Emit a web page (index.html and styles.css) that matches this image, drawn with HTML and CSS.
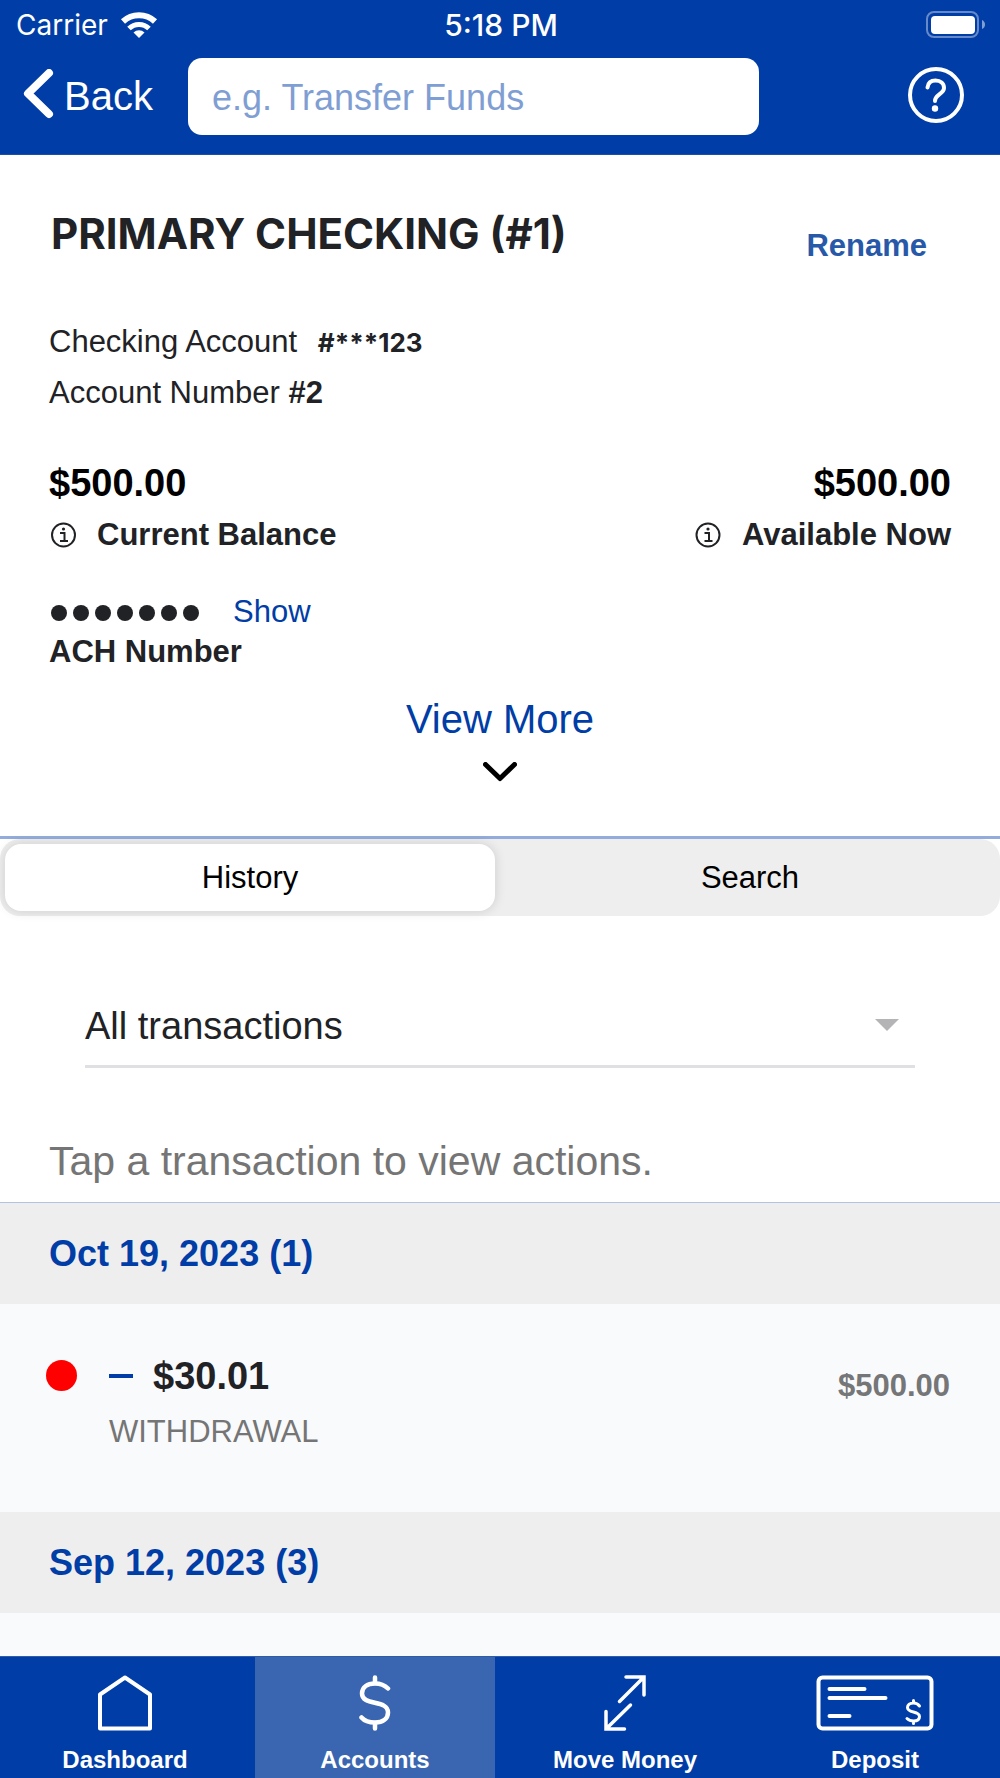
FILE: index.html
```html
<!DOCTYPE html>
<html lang="en">
<head>
    <meta charset="UTF-8">
    <meta name="viewport" content="width=device-width, initial-scale=1.0">
    <title>Primary Checking</title>
    <link rel="stylesheet" href="styles.css">
</head>
<body>
    <header class="header">
        <div class="status-bar">
            <div class="carrier">
                <span>Carrier</span>
                <svg width="38" height="28" viewBox="0 0 38 28" fill="none" stroke="#fff" stroke-width="6">
                    <path d="M3 10.500a23.500 23.500 0 0 1 32 0"/>
                    <path d="M9 17.500a14.200 14.200 0 0 1 20 0" stroke-width="5"/>
                    <path d="M19 27l-5.500-5.500a8 8 0 0 1 11 0z" fill="#fff" stroke="none"/>
                </svg>
            </div>
            <div class="time">5:18 PM</div>
            <div class="battery">
                <svg width="60" height="28" viewBox="0 0 60 28" fill="none">
                    <rect x="1" y="1" width="51" height="25" rx="7" stroke="#fff" stroke-opacity=".4" stroke-width="2"/>
                    <rect x="5" y="5" width="44" height="18" rx="4" fill="#fff"/>
                    <path d="M56 9q3 1.500 3 4.500t-3 4.500z" fill="#fff" fill-opacity=".5"/>
                </svg>
            </div>
        </div>
        <div class="nav">
            <a href="#" class="back">
                <svg width="32" height="50" viewBox="0 0 32 50" fill="none" stroke="#fff" stroke-width="8" stroke-linecap="round" stroke-linejoin="round">
                    <path d="M26 4L5 24.500L26 45"/>
                </svg>
                <span>Back</span>
            </a>
            <input type="text" class="search" placeholder="e.g. Transfer Funds" aria-label="Search">
            <button type="button" class="help" aria-label="Help">
                <svg width="56" height="56" viewBox="0 0 56 56" fill="none" stroke="#fff" stroke-width="4" stroke-linecap="round">
                    <circle cx="28" cy="28" r="26"/>
                    <path d="M19.500 20.500c.5-4.500 3.500-7 8-7c5 0 8.500 3 8.500 7.500c0 6-9 6.500-9 13"/>
                    <circle cx="27" cy="41.500" r="3.200" fill="#fff" stroke="none"/>
                </svg>
            </button>
        </div>
    </header>

    <main class="content">
        <section class="account">
            <div class="title-row">
                <h1>PRIMARY CHECKING (#1)</h1>
                <button type="button" class="rename">Rename</button>
            </div>
            <p class="info-line">Checking Account <span class="masked">#***123</span></p>
            <p class="info-line">Account Number <b>#2</b></p>

            <div class="balances">
                <div class="balance">
                    <div class="amount">$500.00</div>
                    <div class="balance-label">
                        <svg width="28" height="28" viewBox="0 0 28 28" fill="none" stroke="#212226" stroke-width="2">
                            <circle cx="14.500" cy="14" r="11.500"/>
                            <path d="M11 12H15.500v8M11 20h8"/>
                            <circle cx="14.500" cy="8" r="1.600" fill="#212226" stroke="none"/>
                        </svg>
                        <span>Current Balance</span>
                    </div>
                </div>
                <div class="balance right">
                    <div class="amount">$500.00</div>
                    <div class="balance-label">
                        <svg width="28" height="28" viewBox="0 0 28 28" fill="none" stroke="#212226" stroke-width="2">
                            <circle cx="14" cy="14" r="11.500"/>
                            <path d="M10.500 12H15v8M10.500 20h8"/>
                            <circle cx="14" cy="8" r="1.600" fill="#212226" stroke="none"/>
                        </svg>
                        <span>Available Now</span>
                    </div>
                </div>
            </div>

            <div class="ach">
                <div class="ach-value">
                    <div class="dots"><i></i><i></i><i></i><i></i><i></i><i></i><i></i></div>
                    <button type="button" class="show">Show</button>
                </div>
                <div class="ach-label">ACH Number</div>
            </div>

            <button type="button" class="view-more">
                <span>View More</span>
                <svg width="34" height="20" viewBox="0 0 34 20" fill="none" stroke="#000" stroke-width="5" stroke-linecap="round" stroke-linejoin="round">
                    <path d="M2.500 2.500L17 16.500L31.500 2.500"/>
                </svg>
            </button>
        </section>

        <div class="segments">
            <button type="button" class="segment active">History</button>
            <button type="button" class="segment">Search</button>
        </div>

        <div class="filter">
            <select aria-label="Transaction filter">
                <option>All transactions</option>
            </select>
        </div>

        <p class="hint">Tap a transaction to view actions.</p>

        <section class="transactions">
            <h2>Oct 19, 2023 (1)</h2>
            <div class="transaction">
                <span class="marker"></span>
                <div class="details">
                    <div class="change"><span class="minus"></span>$30.01</div>
                    <div class="type">WITHDRAWAL</div>
                </div>
                <div class="running">$500.00</div>
            </div>
            <h2>Sep 12, 2023 (3)</h2>
        </section>
    </main>

    <nav class="tab-bar">
        <a href="#" class="tab">
            <svg width="54" height="56" viewBox="0 0 54 56" fill="none" stroke="#fff" stroke-width="4" stroke-linejoin="round">
                <path d="M27 2.500L52 19.500V53.500H2V19.500Z"/>
            </svg>
            <span>Dashboard</span>
        </a>
        <a href="#" class="tab active">
            <svg width="32" height="56" viewBox="0 0 32 56" fill="none" stroke="#fff" stroke-width="4.500" stroke-linecap="round">
                <path d="M29 13.500C26 10.500 21.500 8.500 16 8.500C8 8.500 3 12.500 3 18.500C3 31.500 29 24 29 37.500C29 43.500 24 47.500 16 47.500C10 47.500 5.500 46 2.500 42.500"/>
                <path d="M16 2.500v5.500M16 48v5.500"/>
            </svg>
            <span>Accounts</span>
        </a>
        <a href="#" class="tab">
            <svg width="42" height="56" viewBox="0 0 42 56" fill="none" stroke="#fff" stroke-width="3.500" stroke-linecap="round">
                <path d="M22 2H40V20M39 3L15.500 26.500"/>
                <path d="M2 36.500V54H20.500M3 53L26.500 30"/>
            </svg>
            <span>Move Money</span>
        </a>
        <a href="#" class="tab">
            <svg width="118" height="56" viewBox="0 0 118 56" fill="none" stroke="#fff" stroke-width="4" stroke-linecap="round">
                <rect x="2.500" y="2.500" width="113" height="51" rx="4"/>
                <path d="M13.500 14H48.500M13.500 23H69.500M13.500 41H33.500"/>
                <path d="M103.500 31C102 29 100 28 97.500 28C94 28 91.500 30 91.500 32.500C91.500 38.500 103.500 35.500 103.500 41.500C103.500 44.500 101 46 97.500 46C94.500 46 92.500 45 91 43.500M97.500 25.500V28M97.500 46V48.500" stroke-width="3"/>
            </svg>
            <span>Deposit</span>
        </a>
    </nav>
</body>
</html>
```
FILE: styles.css
```css
* {
    box-sizing: border-box;
}
body {
    margin: 0;
    height: 100vh;
    display: flex;
    flex-direction: column;
    background-color: white;
    color: #212226;
    font-family: "Liberation Sans", Arial, sans-serif;
    font-size: 31px;
}
h1, h2, p {
    margin: 0;
}
button {
    padding: 0;
    border: none;
    background: none;
    color: inherit;
    font: inherit;
    cursor: pointer;
}
a {
    color: inherit;
    text-decoration: none;
}
svg {
    display: block;
    flex: none;
}

/* header */
.header {
    background-color: #003da6;
    border-bottom: 1px solid #1c4ea4;
    color: white;
}
.status-bar {
    display: grid;
    grid-template-columns: 1fr auto 1fr;
    align-items: center;
    height: 50px;
    padding: 0 14px 0 16px;
    font-family: Inter, sans-serif;
    font-size: 28px;
}
.carrier {
    display: flex;
    align-items: center;
    gap: 12px;
}
.time {
    font-size: 30px;
    font-weight: 500;
}
.battery {
    justify-self: end;
}
.nav {
    display: flex;
    align-items: center;
    padding: 8px 36px 19px 23px;
}
.back {
    display: flex;
    align-items: center;
    gap: 9px;
    width: 165px;
    font-size: 40px;
}
.back svg {
    margin-bottom: 6px;
}
.search {
    flex: 1;
    min-width: 0;
    height: 77px;
    padding: 2px 24px 0;
    border: none;
    border-radius: 14px;
    background-color: white;
    font-family: inherit;
    font-size: 36px;
}
.search::placeholder {
    color: #7f9ed3;
}
.help {
    margin: 0 0 4px 149px;
}

/* account summary */
.content {
    flex: 1;
    min-height: 0;
    overflow: hidden;
    display: flex;
    flex-direction: column;
}
.account {
    padding: 54px 49px 54px;
    border-bottom: 3px solid #93acdb;
}
.title-row {
    display: flex;
    justify-content: space-between;
    align-items: flex-start;
    margin-bottom: 52px;
    padding: 0 24px 0 2px;
}
h1 {
    font-family: Inter, sans-serif;
    font-size: 42px;
    line-height: 50px;
}
.rename {
    margin-top: 19px;
    color: #2858a8;
    font-weight: bold;
    line-height: 36px;
}
.info-line {
    line-height: 51px;
}
.masked {
    margin-left: 12px;
    font-family: Inter, sans-serif;
    font-size: 26px;
    font-weight: bold;
    line-height: 1;
}
.balances {
    display: flex;
    justify-content: space-between;
    margin-top: 40px;
}
.balance.right {
    text-align: right;
}
.amount {
    color: black;
    font-size: 38px;
    font-weight: bold;
    line-height: 50px;
}
.balance-label {
    display: flex;
    align-items: center;
    gap: 20px;
    margin-top: 2px;
    font-weight: bold;
    line-height: 50px;
}
.ach {
    margin-top: 32px;
    line-height: 40px;
}
.ach-value {
    display: flex;
    align-items: center;
    gap: 34px;
    padding-left: 2px;
}
.dots {
    display: flex;
    gap: 6px;
    padding-top: 2px;
}
.dots i {
    width: 16px;
    height: 16px;
    border-radius: 50%;
    background-color: #212226;
}
.show {
    color: #003da6;
    line-height: 40px;
}
.ach-label {
    font-weight: bold;
}
.view-more {
    display: flex;
    flex-direction: column;
    align-items: center;
    gap: 20px;
    margin: 24px auto 0;
    color: #003da6;
    font-size: 40px;
    line-height: 46px;
}

/* history / search switch */
.segments {
    flex: none;
    display: flex;
    height: 77px;
    padding: 5px 0;
    border-radius: 20px;
    background-color: #eee;
}
.segment {
    flex: 1;
    margin: 0 5px;
    border-radius: 16px;
    color: black;
}
.segment.active {
    background-color: white;
    box-shadow: 0 0 12px rgba(0, 0, 0, 0.14);
}

/* transactions */
.filter {
    position: relative;
    margin: 80px 85px 0;
    padding-bottom: 9px;
    border-bottom: 3px solid #dfdfe4;
}
.filter::after {
    content: "";
    position: absolute;
    top: 23px;
    right: 16px;
    border: 12px solid transparent;
    border-top-color: #b4b4b6;
    border-bottom: none;
    pointer-events: none;
}
.filter select {
    appearance: none;
    display: block;
    width: 100%;
    height: 60px;
    padding: 0;
    border: none;
    background: none;
    color: #212226;
    font-family: inherit;
    font-size: 38px;
}
.hint {
    padding: 69px 49px 17px;
    border-bottom: 1px solid #b4c3e3;
    color: #757575;
    font-size: 41px;
    line-height: 48px;
}
.transactions {
    flex: 1;
    background-color: #f9fafc;
}
h2 {
    padding: 0 49px;
    background-color: #eee;
    color: #003da6;
    font-size: 36px;
    line-height: 101px;
}
.transaction {
    display: flex;
    align-items: flex-start;
    height: 208px;
    padding: 50px 50px 0 46px;
}
.marker {
    width: 31px;
    height: 31px;
    margin: 6px 32px 0 0;
    border-radius: 50%;
    background-color: red;
}
.details {
    flex: 1;
}
.change {
    display: flex;
    align-items: center;
    gap: 20px;
    font-size: 38px;
    font-weight: bold;
    line-height: 44px;
}
.minus {
    width: 24px;
    height: 4px;
    background-color: #003da6;
}
.type {
    margin-top: 16px;
    color: #757575;
    line-height: 36px;
}
.running {
    margin-top: 14px;
    color: #757678;
    font-weight: bold;
    line-height: 36px;
}

/* bottom tabs */
.tab-bar {
    display: flex;
    border-top: 1px solid #2f5ca8;
    background-color: #003da6;
    color: white;
}
.tab {
    flex: 1;
    display: flex;
    flex-direction: column;
    align-items: center;
    gap: 15px;
    margin: 0 5px;
    padding: 18px 0 4px;
    font-size: 24px;
    font-weight: bold;
    line-height: 28px;
}
.tab.active {
    background-color: #3a66b1;
}
```
